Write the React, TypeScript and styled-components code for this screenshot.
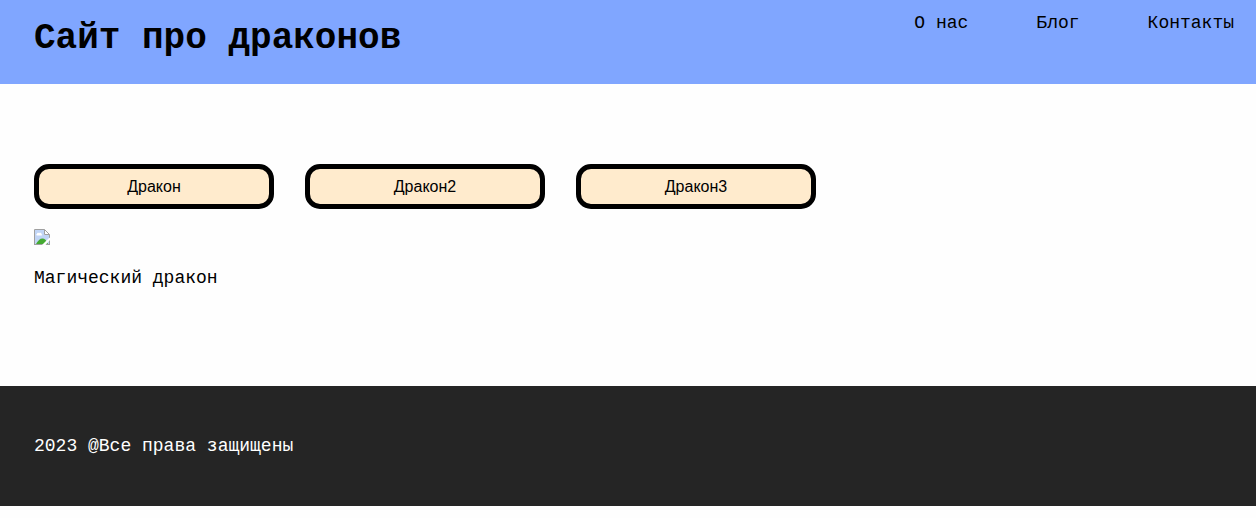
import React from "react";
import styled, { createGlobalStyle } from "styled-components";

const GlobalStyle = createGlobalStyle`
  *, *::before, *::after { box-sizing: border-box; }
  body {
    margin: 0;
    background: #fefefe;
    color: #000;
    font-family: "Liberation Mono", "Courier New", monospace;
    font-size: 18px;
    line-height: 20px;
  }
`;

const Header = styled.header`
  display: flex;
  justify-content: space-between;
  align-items: flex-start;
  padding: 13px 22px 18px 34px;
  background: #80a6ff;
`;

const Title = styled.h1`
  margin: 6px 0 7px;
  font-size: 36px;
  line-height: 40px;
  font-weight: 700;
`;

const Nav = styled.nav`
  display: flex;
  gap: 68px;
`;

const NavLink = styled.a`
  color: inherit;
  text-decoration: none;
`;

const Main = styled.main`
  padding: 80px 34px 98px;
`;

const Tabs = styled.div`
  display: flex;
  flex-wrap: wrap;
  gap: 31px;
`;

const TabButton = styled.button`
  width: 240px;
  height: 45px;
  padding: 0;
  border: 5px solid #000;
  border-radius: 15px;
  background: #ffebcd;
  color: #000;
  font-family: "Liberation Sans", Arial, sans-serif;
  font-size: 16px;
  cursor: pointer;
`;

const Picture = styled.svg`
  display: block;
  width: 16px;
  height: 16px;
  margin-top: 20px;
`;

const Caption = styled.p`
  margin: 23px 0 0;
`;

const Footer = styled.footer`
  padding: 50px 34px;
  background: #252525;
  color: #fff;
`;

const Copyright = styled.p`
  margin: 0;
`;

const links = ["О нас", "Блог", "Контакты"];
const dragons = ["Дракон", "Дракон2", "Дракон3"];

const MissingPicture = () => (
  <Picture viewBox="0 0 16 16" aria-hidden="true">
    <path d="M0.5 0.5H10.5L15.5 5.5V15.5H0.5Z" fill="#fff" />
    <path d="M1 1H10V6H15V15H1Z" fill="#c1d5f6" />
    <path d="M3 5C3 3.8 4.6 3.5 5 4.3C6 3.2 7.8 4 7.5 5.2C8.5 5.3 8.4 6.5 7.5 6.5H3.2C2 6.5 2 5.2 3 5Z" fill="#fff" />
    <path d="M0.5 16V0.5H10.5L15.5 5.5V16M10.5 0.5V5.5H15.5M0 15.5H16" fill="none" stroke="#a0a0a0" />
    <path d="M2 15C4 11.5 6 9.5 8.5 9.5C10.5 9.5 12.5 11 14 15Z" fill="#45aa32" />
    <path d="M8 16L14 10L16 8.5V11L11.5 16Z" fill="#fefefe" />
  </Picture>
);

export default function App() {
  return (
    <>
      <GlobalStyle />
      <Header>
        <Title>Сайт про драконов</Title>
        <Nav>
          {links.map((label) => (
            <NavLink key={label} href="#">{label}</NavLink>
          ))}
        </Nav>
      </Header>
      <Main>
        <Tabs>
          {dragons.map((name) => (
            <TabButton key={name} type="button">{name}</TabButton>
          ))}
        </Tabs>
        <MissingPicture />
        <Caption>Магический дракон</Caption>
      </Main>
      <Footer>
        <Copyright>2023 @Все права защищены</Copyright>
      </Footer>
    </>
  );
}
